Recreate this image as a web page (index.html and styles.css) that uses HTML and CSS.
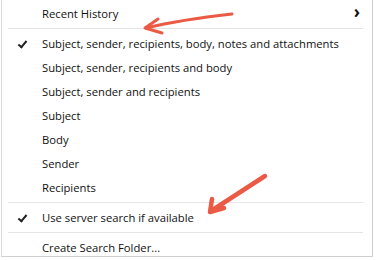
FILE: index.html
```html
<!DOCTYPE html>
<html lang="en">
<head>
    <meta charset="UTF-8">
    <title>Search Options Menu</title>
    <link rel="stylesheet" href="styles.css">
</head>
<body>
    <div class="menu">
        <div class="item submenu">Recent History <span class="chevron">&#x203A;</span></div>
        <div class="separator"></div>
        <div class="item checked">Subject, sender, recipients, body, notes and attachments</div>
        <div class="item">Subject, sender, recipients and body</div>
        <div class="item">Subject, sender and recipients</div>
        <div class="item">Subject</div>
        <div class="item">Body</div>
        <div class="item">Sender</div>
        <div class="item">Recipients</div>
        <div class="separator"></div>
        <div class="item checked">Use server search if available</div>
        <div class="separator"></div>
        <div class="item">Create Search Folder...</div>

        <!-- hand-drawn annotations -->
        <svg class="annotations" width="377" height="260" viewBox="0 0 377 260">
            <g fill="none" stroke="#ea5a45" stroke-linecap="round" stroke-linejoin="round">
                <path d="M232 14 C 205 17, 175 21, 146 28" stroke-width="3"/>
                <path d="M158 19 L 145 28 L 162 33" stroke-width="3"/>
                <path d="M265 176 L 211 211" stroke-width="4.5"/>
                <path d="M212 199 L 210 212 L 224 208" stroke-width="4.5"/>
            </g>
        </svg>
    </div>
</body>
</html>
```

FILE: styles.css
```css
body {
    margin: 0;
    padding: 0;
    background: #fff;
    font-family: 'Open Sans', 'Noto Sans', sans-serif;
    font-size: 11.25px;
    color: #111;
}
.menu {
    position: relative;
    width: 372px;
    height: 257px;
    margin-left: 1px;
    padding-top: 1px;
    box-sizing: border-box;
    background: #fff;
    border-left: 1px solid #dcdcdc;
    border-right: 1px solid #cfcfcf;
    border-bottom: 1px solid #cfcfcf;
}
.item {
    display: flex;
    align-items: center;
    height: 24px;
    padding-left: 40px;
    position: relative;
}
.submenu {
    justify-content: space-between;
    padding-right: 12px;
}
.chevron {
    font-size: 17px;
    font-weight: bold;
    line-height: 1;
    margin-top: -3px;
}
.checked::before {
    content: "";
    position: absolute;
    left: 16px;
    top: 10px;
    width: 7px;
    height: 3px;
    border-left: 2px solid #222;
    border-bottom: 2px solid #222;
    transform: rotate(-50deg);
}
.separator {
    height: 1px;
    margin: 3px 9px 2px 6px;
    background: #e4e4e4;
}
.annotations {
    position: absolute;
    left: -2px;
    top: 0;
    pointer-events: none;
}
```
